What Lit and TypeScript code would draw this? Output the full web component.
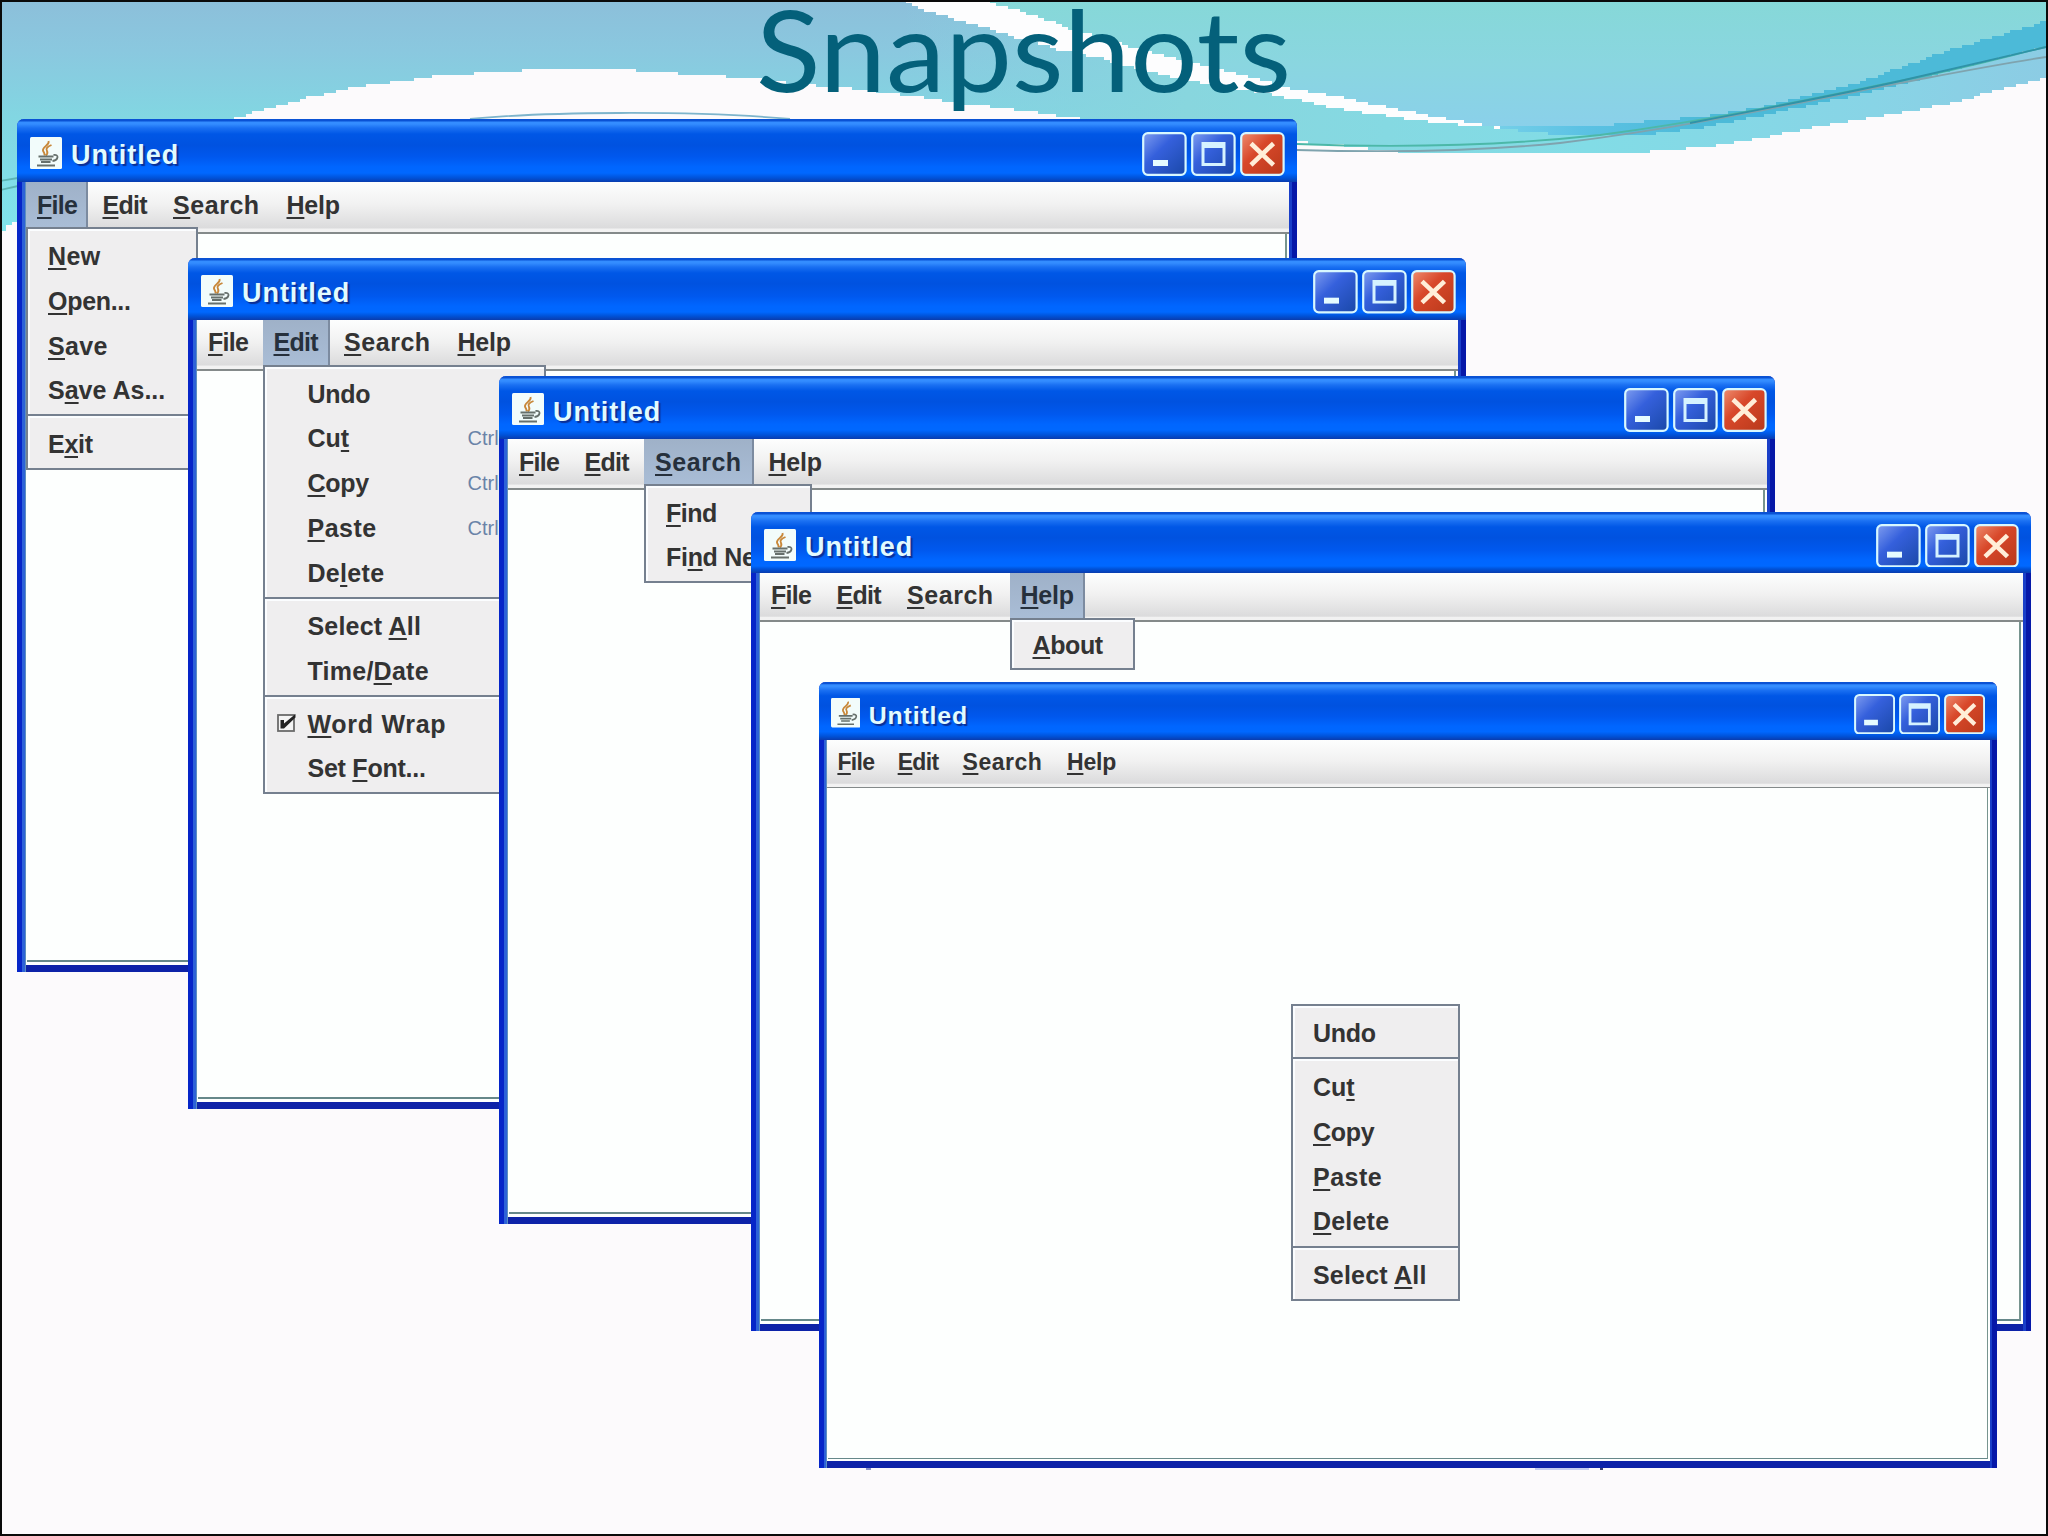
import { LitElement, html, svg, css, nothing } from "lit";
import { customElement, property } from "lit/decorators.js";

type Pt = [number, number];

interface Entry {
  label: string;
  key?: string;
  checked?: boolean;
  track?: number;
}

interface WindowSpec {
  x: number;
  y: number;
  w: number;
  h: number;
  title: number;
  bar: number;
  line: number;
  pad: number;
  zoom?: number;
  open?: string;
  popupWidth?: number;
  row?: number;
  indent?: number;
  groups?: Entry[][];
}

const MENUS = [
  { label: "_File", width: 62, track: -0.7 },
  { label: "_Edit", width: 67, track: -0.7 },
  { label: "_Search", width: 110, track: 0.55 },
  { label: "_Help", width: 75, track: -0.2 },
];

/* An underscore marks the mnemonic letter that follows it. */
const mnemonic = (text: string) => {
  const i = text.indexOf("_");
  if (i < 0) return html`${text}`;
  return html`${text.slice(0, i)}<u>${text[i + 1]}</u>${text.slice(i + 2)}`;
};

const WINDOWS: WindowSpec[] = [
  {
    x: 17, y: 119, w: 1280, h: 853, title: 63, bar: 52, line: 47, pad: 12.5,
    open: "_File", popupWidth: 172, row: 44.7, indent: 20,
    groups: [
      [{ label: "_New", track: 0.4 }, { label: "_Open...", track: -0.3 }, { label: "_Save", track: 0.3 }, { label: "S_ave As..." }],
      [{ label: "E_xit", track: -0.3 }],
    ],
  },
  {
    x: 188, y: 258, w: 1278, h: 850.5, title: 61.5, bar: 51, line: 45, pad: 10.5,
    open: "_Edit", popupWidth: 283, row: 44.7, indent: 43,
    groups: [
      [
        { label: "Undo", track: -0.3 },
        { label: "Cu_t", key: "Ctrl-X" },
        { label: "_Copy", key: "Ctrl-C", track: -0.3 },
        { label: "_Paste", key: "Ctrl-V", track: 0.5 },
        { label: "De_lete", track: 0.3 },
      ],
      [{ label: "Select _All", track: 0.2 }, { label: "Time/_Date", track: 0.25 }],
      [{ label: "_Word Wrap", checked: true, track: 0.7 }, { label: "Set _Font...", track: -0.25 }],
    ],
  },
  {
    x: 499, y: 375.5, w: 1276, h: 848.5, title: 63, bar: 51.5, line: 46, pad: 8.5,
    open: "_Search", popupWidth: 168, row: 44.7, indent: 20,
    groups: [[{ label: "_Find", track: -0.5 }, { label: "Fi_nd Next", track: -0.3 }]],
  },
  {
    x: 751, y: 512, w: 1280, h: 819, title: 61, bar: 49, line: 45, pad: 12.5,
    open: "_Help", popupWidth: 125, row: 41.5, indent: 21,
    groups: [[{ label: "_About", track: -0.4 }]],
  },
  { x: 819, y: 682, w: 1280, h: 854, title: 63.5, bar: 51.5, line: 49, pad: 12.5, zoom: 0.9203 },
];

const CONTEXT: Entry[][] = [
  [{ label: "Undo", track: -0.3 }],
  [{ label: "Cu_t" }, { label: "_Copy", track: -0.3 }, { label: "_Paste", track: 0.5 }, { label: "_Delete", track: 0.2 }],
  [{ label: "Select _All", track: 0.2 }],
];

@customElement("popup-menu")
class PopupMenu extends LitElement {
  @property({ attribute: false }) groups: Entry[][] = [];
  @property({ type: Number }) row = 44.7;
  @property({ type: Number }) indent = 20;

  static styles = css`
    :host {
      display: block;
      box-sizing: border-box;
      border: 2px solid #75808f;
      border-top: none;
      background: #efeeef;
      font: bold 25px "Liberation Sans", Arial, sans-serif;
      color: #333;
    }
    .group {
      border-top: 2px solid #75808f;
      padding: 5.3px 0 1.3px;
      box-shadow: inset 2px 2px 0 #fbfdff;
    }
    .entry {
      display: flex;
      align-items: center;
      white-space: nowrap;
    }
    .mark {
      flex: none;
      display: flex;
      justify-content: flex-end;
      box-sizing: border-box;
      padding-right: 10px;
    }
    .mark svg { display: block; margin-top: -2px; }
    .label { flex: 1; }
    .key {
      flex: none;
      width: 76px;
      font-weight: normal;
      font-size: 20px;
      color: #6a83a8;
    }
    u {
      text-decoration: underline 2px;
      text-underline-offset: 3px;
      text-decoration-skip-ink: none;
    }
  `;

  render() {
    return this.groups.map(
      (g) => html`<div class="group">
        ${g.map(
          (e) => html`<div class="entry" style="height:${this.row}px;line-height:${this.row}px">
            <span class="mark" style="width:${this.indent}px">
              ${e.checked
                ? html`<svg width="22" height="22" viewBox="0 0 22 22">
                    <rect x="2" y="3" width="16" height="16" fill="#f4f4f4" stroke="#6b6b6b" stroke-width="1.8" />
                    <path d="M4.5 8 H8 V11.5 L19.5 2 V5.5 L8 16.5 H4.5Z" fill="#222" />
                  </svg>`
                : nothing}
            </span>
            <span class="label" style="letter-spacing:${e.track ?? 0}px">${mnemonic(e.label)}</span>
            ${e.key ? html`<span class="key">${e.key}</span>` : nothing}
          </div>`
        )}
      </div>`
    );
  }
}

@customElement("app-window")
class AppWindow extends LitElement {
  @property({ attribute: false }) spec!: WindowSpec;

  static styles = css`
    :host { display: block; isolation: isolate; }
    .frame {
      box-sizing: border-box;
      height: 100%;
      display: flex;
      flex-direction: column;
      border-radius: 7px 7px 0 0;
      background: linear-gradient(90deg, #0625c8 0 5px, #2d62d8 5px 8px, #5b8fc0 8px 9px, #0d22a8 9px calc(100% - 8px), #1a3fc8 calc(100% - 8px) calc(100% - 5px), #0618a8 calc(100% - 5px));
    }
    .title {
      flex: none;
      box-sizing: border-box;
      display: flex;
      align-items: center;
      padding-left: 13px;
      border-radius: 7px 7px 0 0;
      background: linear-gradient(#0a52d4 0 2px, #348dff 3px 5px, #1a70f2 9px, #0057e6 15px, #0052e0 26px, #0058ee 38px, #0066ff 48px, #0068ff 54px, #0052d8 calc(100% - 4px), #0a3cae 100%);
    }
    .logo { flex: none; width: 32px; height: 32px; margin-top: 4px; }
    .name {
      flex: 1;
      padding: 9px 0 0 9px;
      font: bold 27px/32px "Liberation Sans", Arial, sans-serif;
      letter-spacing: 0.95px;
      color: #e2fbff;
      text-shadow: 2px 2px 1px #0a2f96;
    }
    .buttons { display: flex; gap: 4px; margin-top: 6px; }
    .buttons svg { display: block; }
    .inside {
      flex: 1;
      min-height: 0;
      display: flex;
      flex-direction: column;
      margin: 0 8px 7px 9px;
      background: #fdfffe;
    }
    .bar {
      flex: none;
      box-sizing: border-box;
      display: flex;
      gap: 3.5px;
      background: linear-gradient(#fdfefe, #f1f1f1 45%, #dbdbdc 92%, #f2f2f2 94%);
      border-bottom: 2px solid #848a8a;
    }
    .menu {
      position: relative;
      box-sizing: border-box;
      height: 45px;
      padding-left: 11px;
      font: bold 25px "Liberation Sans", Arial, sans-serif;
      color: #333;
    }
    .menu.open {
      background: linear-gradient(#9fb1c8, #a9bdd6);
      border-right: 2px solid #7c8ba0;
      color: #26303c;
    }
    u {
      text-decoration: underline 2px;
      text-underline-offset: 3px;
      text-decoration-skip-ink: none;
    }
    .page {
      flex: 1;
      margin: 0 2px 3px 1px;
      border-right: 2px solid #77958f;
      border-bottom: 2px solid #66888a;
    }
    popup-menu { position: absolute; left: 0; top: 100%; z-index: 1; letter-spacing: 0; }
  `;

  private button(kind: "min" | "max" | "close", h: number) {
    const red = kind === "close";
    return html`<svg width="45" height=${h} viewBox="0 0 45 44" preserveAspectRatio="none">
      <defs>
        <linearGradient id=${kind} x1="0" y1="0" x2="1" y2="1">
          <stop offset="0" stop-color=${red ? "#ee8d70" : "#7f9df0"} />
          <stop offset="0.4" stop-color=${red ? "#d8482a" : "#3560dc"} />
          <stop offset="1" stop-color=${red ? "#b8391a" : "#1a48a8"} />
        </linearGradient>
      </defs>
      <rect x="1.2" y="1.2" width="42.4" height="41.6" rx="4.5" fill="url(#${kind})" stroke="#d8f8ff" stroke-width="2.2" />
      ${kind === "min" ? svg`<rect x="11" y="28" width="15" height="6" fill="#e6fbff" />` : nothing}
      ${kind === "max"
        ? svg`<path fill-rule="evenodd" d="M10.5 10 H34.500 V34 H10.5Z M13.500 16 V31 H31.500 V16Z" fill="#d6f2ff" />`
        : nothing}
      ${red
        ? svg`<path d="M11 11.500 L33.500 33 M33.500 11.500 L11 33" stroke="#ffeed8" stroke-width="4.600" fill="none" />`
        : nothing}
    </svg>`;
  }

  render() {
    const s = this.spec;
    const bh = s.title > 62 ? 44 : 43.5;
    return html`<div class="frame">
      <div class="title" style="height:${s.title}px;padding-right:${s.pad}px">
        <svg class="logo" viewBox="0 0 32 32">
          <rect width="32" height="32" rx="1.5" fill="#f2fcfb" />
          <path d="M18.500 4 C20 8 12 10 13 13.500 C13.500 15.500 15 16 14.500 18.500 M21.500 8 C17 10 15.500 11.500 17 14 C18 16 17.500 17 16 18.500" fill="none" stroke="#c8883a" stroke-width="1.900" />
          <path d="M8.500 19.500 H23.500 M10 22.500 H22 M11 25 H20.500 M7 28.500 H25" fill="none" stroke="#66706c" stroke-width="1.800" />
          <path d="M23.500 18 C29.500 17 28.500 23 22.500 24" fill="none" stroke="#66706c" stroke-width="1.800" />
        </svg>
        <span class="name">Untitled</span>
        <div class="buttons">
          ${this.button("min", bh)}${this.button("max", bh)}${this.button("close", bh)}
        </div>
      </div>
      <div class="inside">
        <div class="bar" style="height:${s.bar}px">
          ${MENUS.map(
            (m) => html`<div
              class="menu ${m.label === s.open ? "open" : ""}"
              style="width:${m.width}px;line-height:${s.line}px;letter-spacing:${m.track}px"
            >
              ${mnemonic(m.label)}
              ${m.label === s.open
                ? html`<popup-menu
                    style="width:${s.popupWidth}px"
                    .groups=${s.groups!}
                    .row=${s.row!}
                    .indent=${s.indent!}
                  ></popup-menu>`
                : nothing}
            </div>`
          )}
        </div>
        <div class="page"></div>
      </div>
    </div>`;
  }
}

/* Samples a piecewise curve into coarse horizontal steps. */
const stepped = (pts: Pt[], dx = 6, dy = 3): Pt[] => {
  const out: Pt[] = [];
  const at = (x: number) => {
    let i = 0;
    while (i < pts.length - 2 && x > pts[i + 1][0]) i++;
    const [x0, y0] = pts[i];
    const [x1, y1] = pts[i + 1];
    return y0 + ((y1 - y0) * (x - x0)) / (x1 - x0);
  };
  const end = pts[pts.length - 1][0];
  for (let x = pts[0][0]; x < end; x += dx) {
    const y = Math.round(at(x + dx / 2) / dy) * dy;
    out.push([x, y], [Math.min(x + dx, end), y]);
  }
  return out;
};
const poly = (...p: Pt[][]) => p.flat().map((q) => q.join(",")).join(" ");

const LOWER = stepped([
  [0, 232], [17, 221], [90, 180], [235, 118], [270, 108], [310, 97], [350, 88], [415, 79],
  [435, 76], [483, 73], [527, 70], [633, 70], [660, 73], [693, 74], [755, 79], [800, 84],
  [850, 88], [884, 93], [929, 98], [965, 104], [1005, 108], [1054, 115], [1100, 121],
  [1300, 142], [1330, 144], [1390, 151], [1422, 154], [1620, 154], [1667, 150], [1710, 146],
  [1760, 138], [1800, 130], [1850, 121], [1900, 113], [1950, 103], [2000, 90], [2046, 77],
]);
const BAND_TOP = stepped([
  [990, 2], [1024, 12], [1060, 25], [1100, 38], [1150, 52], [1200, 65], [1250, 77],
  [1290, 88], [1350, 99], [1400, 110], [1450, 119], [1500, 127],
]);
const BAND_BOTTOM = stepped([
  [906, 2], [925, 10], [950, 18], [985, 27], [1024, 40], [1060, 50], [1100, 58], [1130, 67],
  [1170, 77], [1270, 94], [1330, 107], [1380, 115], [1430, 122], [1500, 128],
]);
const STRIPE_TOP = stepped([
  [1500, 126], [1600, 126], [1640, 122], [1700, 117], [1760, 107], [1800, 98], [1850, 85],
  [1900, 68], [1950, 50], [2000, 35], [2046, 21],
]);
const STRIPE_BOTTOM = stepped([
  [1500, 128], [1550, 134], [1650, 134], [1700, 128], [1760, 116], [1820, 103], [1880, 90],
  [1920, 79], [1960, 68], [2046, 46],
]);
const rev = (p: Pt[]) => [...p].reverse();

@customElement("app-root")
class AppRoot extends LitElement {
  static styles = css`
    :host { display: block; }
    .slide {
      position: relative;
      box-sizing: border-box;
      width: 2048px;
      height: 1536px;
      overflow: hidden;
      border: 2px solid #0a0a0a;
      background: #fcfafc;
    }
    .waves { position: absolute; left: -2px; top: -2px; display: block; }
    h1 {
      position: relative;
      width: max-content;
      margin: 0 auto;
      font: normal 113px/92px Lato, "Open Sans", sans-serif;
      color: #04607a;
      transform: scaleX(1.055);
    }
    app-window, .context { position: absolute; }
    .context { left: 1289px; top: 1002px; width: 169px; }
    .speck { position: absolute; height: 2px; background: #8a93c8; top: 1466px; }
    .s1 { left: 864px; width: 5px; }
    .s2 { left: 1533px; width: 54px; background: #c4cdf0; }
    .s3 { left: 1598px; width: 3px; background: #3a4070; }
  `;

  render() {
    return html`<div class="slide">
      <svg class="waves" width="2048" height="260" viewBox="0 0 2048 260">
        <defs>
          <linearGradient id="sea" gradientUnits="userSpaceOnUse" x1="0" y1="0" x2="0" y2="232">
            <stop offset="0" stop-color="#8cbfda" />
            <stop offset="0.22" stop-color="#8ac8df" />
            <stop offset="0.5" stop-color="#82d6e2" />
            <stop offset="1" stop-color="#80e4ec" />
          </linearGradient>
          <linearGradient id="mid" gradientUnits="userSpaceOnUse" x1="900" y1="0" x2="2046" y2="0">
            <stop offset="0" stop-color="#86d0e0" stop-opacity="0" />
            <stop offset="0.25" stop-color="#88d6de" />
            <stop offset="0.6" stop-color="#82dce6" />
            <stop offset="0.85" stop-color="#88d4e6" />
            <stop offset="1" stop-color="#8ccce4" />
          </linearGradient>
          <linearGradient id="sky" gradientUnits="userSpaceOnUse" x1="0" y1="0" x2="0" y2="128">
            <stop offset="0" stop-color="#86d8d8" />
            <stop offset="0.5" stop-color="#8ad6e0" />
            <stop offset="1" stop-color="#8ad0ea" />
          </linearGradient>
          <linearGradient id="stripe" gradientUnits="userSpaceOnUse" x1="1500" y1="0" x2="1700" y2="0">
            <stop offset="0" stop-color="#74cfe8" />
            <stop offset="0.4" stop-color="#5cc2e4" />
            <stop offset="1" stop-color="#4cbad8" />
          </linearGradient>
        </defs>
        <g shape-rendering="crispEdges">
          <polygon fill="url(#sea)" points=${poly([[0, 0]], LOWER, [[2046, 0]])} />
          <polygon fill="url(#mid)" points=${poly(BAND_BOTTOM, STRIPE_BOTTOM, rev(LOWER.filter((p) => p[0] > 905)))} />
          <polygon fill="url(#sky)" points=${poly(BAND_TOP, STRIPE_TOP, [[2048, 0], [990, 0]])} />
          <polygon fill="#fdfdfe" points=${poly([[906, 0]], BAND_BOTTOM, rev(BAND_TOP), [[990, 0]])} />
          <polygon fill="url(#stripe)" points=${poly(STRIPE_TOP, rev(STRIPE_BOTTOM))} />
        </g>
        <g fill="none" stroke-width="1.8">
          <path stroke="#4cb8a8" d="M1297 144 C1400 148 1500 146 1600 135 C1720 119 1830 95 1900 81 S2000 58 2046 47" />
          <path stroke="#7fa3ae" d="M1297 150 C1400 153 1480 151 1560 143 C1700 126 1820 98 1900 83 S2000 64 2046 57" />
          <path stroke="#2f93a8" d="M1690 123 C1800 102 1860 90 1900 81 S2000 58 2046 47" />
          <path stroke="#7db4cc" d="M470 119 C540 112 690 110 790 119" />
          <path stroke="#5cb4b4" d="M0 181 L18 178 M0 190 L18 186" />
        </g>
      </svg>
      <h1>Snapshots</h1>
      ${WINDOWS.map((s) => {
        const z = s.zoom ?? 1;
        return html`<app-window
          .spec=${s}
          style="left:${(s.x - 2) / z}px;top:${(s.y - 2) / z}px;width:${s.w}px;height:${s.h}px;zoom:${z}"
        ></app-window>`;
      })}
      <popup-menu class="context" .groups=${CONTEXT} .row=${44.9} .indent=${20}></popup-menu>
      <span class="speck s1"></span><span class="speck s2"></span><span class="speck s3"></span>
    </div>`;
  }
}
